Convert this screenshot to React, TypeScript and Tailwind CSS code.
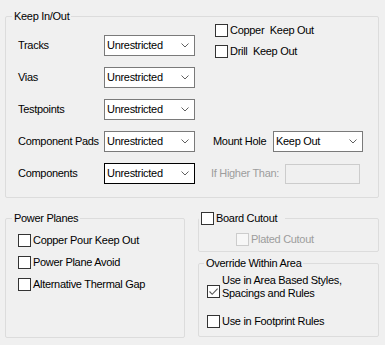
import React from "react";

function Box({ checked = false, disabled = false }: { checked?: boolean; disabled?: boolean }) {
  return (
    <span
      className={
        disabled
          ? "w-[13px] h-[13px] border border-[#cccccc] bg-[#f7f7f7] flex items-center justify-center shrink-0"
          : "w-[13px] h-[13px] border border-[#333333] bg-white flex items-center justify-center shrink-0"
      }
    >
      {checked && (
        <svg width="11" height="11" viewBox="0 0 11 11">
          <path d="M1.5 5.5 L4.2 8.3 L9.6 2.6" stroke="#5a5a5a" strokeWidth="1.1" fill="none" />
        </svg>
      )}
    </span>
  );
}

function Check({ label, checked = false, disabled = false }: { label: string; checked?: boolean; disabled?: boolean }) {
  return (
    <div className="flex items-center h-[13px] gap-[2px]">
      <Box checked={checked} disabled={disabled} />
      <span className={disabled ? "whitespace-pre leading-[13px] text-[#9d9d9d]" : "whitespace-pre leading-[13px]"}>{label}</span>
    </div>
  );
}

function Chevron() {
  return (
    <svg width="8" height="5" viewBox="0 0 8 5" className="shrink-0">
      <path d="M0.5 0.5 L4 4 L7.5 0.5" stroke="#606060" strokeWidth="1" fill="none" />
    </svg>
  );
}

function Combo({ value, focused = false, className = "" }: { value: string; focused?: boolean; className?: string }) {
  return (
    <div
      className={
        (focused
          ? "border-[#000000] "
          : "border-[#7a7a7a] ") +
        "h-[21px] bg-white border flex items-center justify-between pl-[2px] pr-[5px] " +
        className
      }
    >
      <span className="leading-[13px]">{value}</span>
      <Chevron />
    </div>
  );
}

function Row({ label, focused = false }: { label: string; focused?: boolean }) {
  return (
    <div className="flex items-center h-[21px]">
      <span className="w-[86px] whitespace-nowrap">{label}</span>
      <Combo value="Unrestricted" focused={focused} className="w-[91px]" />
    </div>
  );
}

export default function App() {
  return (
    <div className="w-[385px] h-[345px] bg-[#f0f0f0] pl-[5px] pt-[9px] text-[11px] tracking-[-0.3px] text-[#000000] font-['Liberation_Sans',Arial,sans-serif] overflow-hidden">
      <fieldset className="w-[374px] h-[189px] border border-[#dcdcdc] rounded-[2px] m-0 p-0">
        <legend className="ml-[6px] px-[2px] leading-[14px]">Keep In/Out</legend>
        <div className="flex">
          <div className="flex flex-col gap-[11px] pt-[12px] pl-[12px] w-[189px]">
            <Row label="Tracks" />
            <Row label="Vias" />
            <Row label="Testpoints" />
            <Row label="Component Pads" />
            <Row label="Components" focused />
          </div>
          <div className="flex flex-col pt-[1px]">
            <div className="flex flex-col gap-[8px] pl-[20px]">
              <Check label="Copper  Keep Out" />
              <Check label="Drill  Keep Out" />
            </div>
            <div className="flex items-center h-[21px] mt-[73px] pl-[18px]">
              <span className="w-[60px] whitespace-nowrap">Mount Hole</span>
              <Combo value="Keep Out" className="w-[90px]" />
            </div>
            <div className="flex items-center h-[21px] mt-[11px] pl-[16px]">
              <span className="w-[74px] whitespace-nowrap text-[#9d9d9d]">If Higher Than:</span>
              <div className="w-[75px] h-[20px] border border-[#cccccc] bg-[#f0f0f0]" />
            </div>
          </div>
        </div>
      </fieldset>

      <div className="flex mt-[13px]">
        <fieldset className="w-[180px] h-[127px] border border-[#dcdcdc] rounded-[2px] m-0 p-0">
          <legend className="ml-[6px] px-[2px] leading-[14px]">Power Planes</legend>
          <div className="flex flex-col gap-[9px] pt-[9px] pl-[12px]">
            <Check label="Copper Pour Keep Out" />
            <Check label="Power Plane Avoid" />
            <Check label="Alternative Thermal Gap" />
          </div>
        </fieldset>

        <div className="flex flex-col ml-[13px] w-[181px]">
          <fieldset className="w-[181px] h-[41px] border border-[#dcdcdc] rounded-[2px] m-0 p-0">
            <legend className="ml-[0px] pl-[2px] pr-[8px] h-[14px] flex items-center">
              <Check label="Board Cutout" />
            </legend>
            <div className="pt-[8px] pl-[37px]">
              <Check label="Plated Cutout" disabled />
            </div>
          </fieldset>

          <fieldset className="w-[181px] h-[81px] mt-[4px] border border-[#dcdcdc] rounded-[2px] m-0 p-0">
            <legend className="ml-[5px] px-[2px] leading-[14px]">Override Within Area</legend>
            <div className="flex flex-col pt-[4px] pl-[8px]">
              <div className="flex items-start gap-[2px]">
                <div className="mt-[11px]">
                  <Box checked />
                </div>
                <span className="leading-[13px]">
                  Use in Area Based Styles,
                  <br />
                  Spacings and Rules
                </span>
              </div>
              <div className="mt-[15px]">
                <Check label="Use in Footprint Rules" />
              </div>
            </div>
          </fieldset>
        </div>
      </div>
    </div>
  );
}
